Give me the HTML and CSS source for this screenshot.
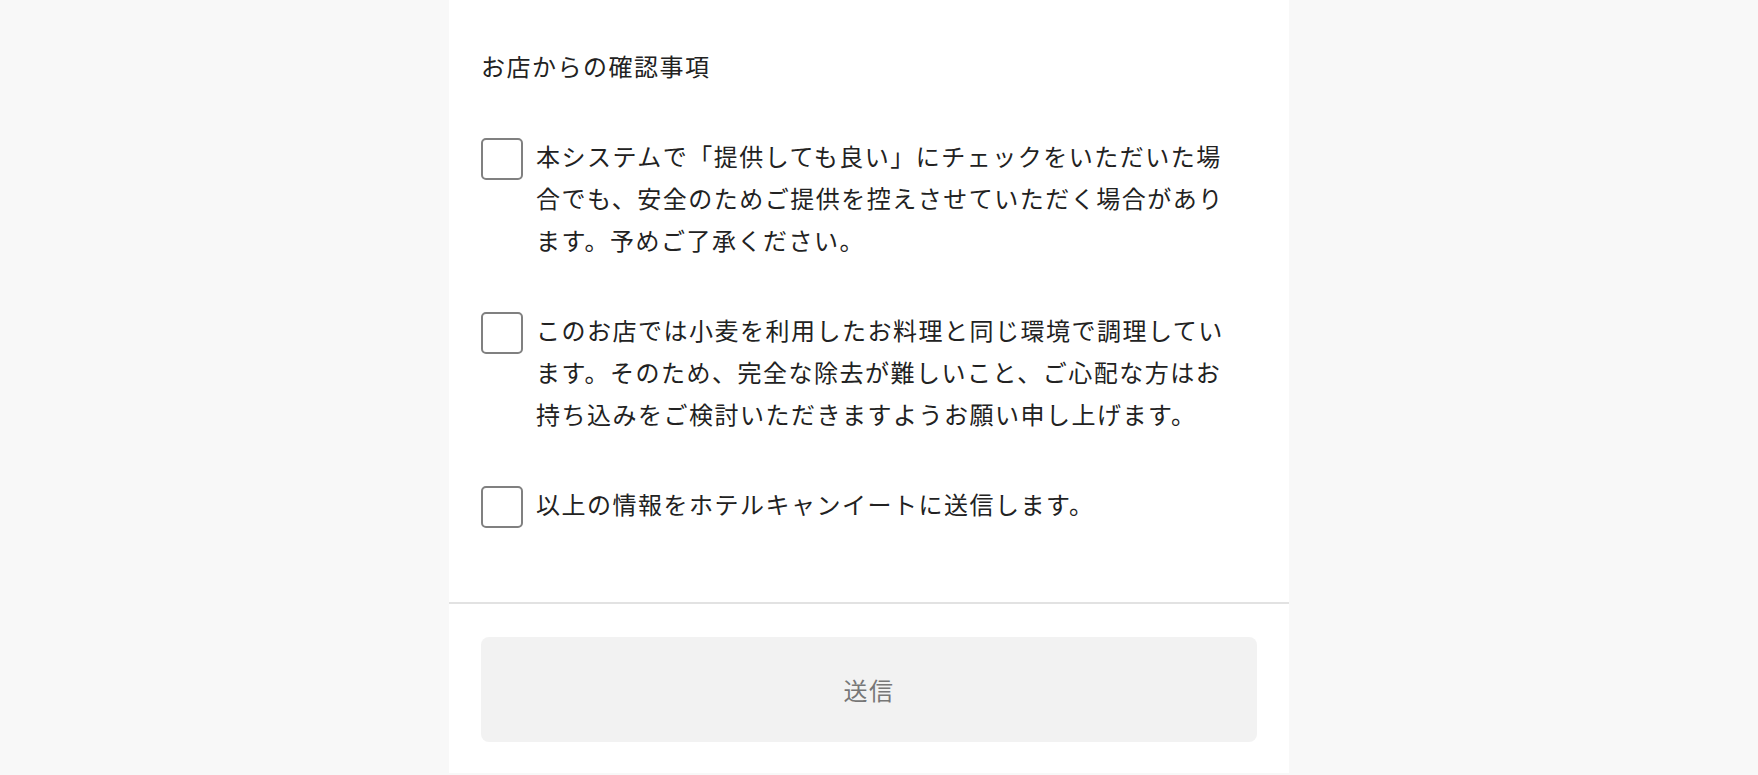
FILE: index.html
```html
<!DOCTYPE html>
<html lang="ja">
<head>
  <meta charset="UTF-8" />
  <meta name="viewport" content="width=device-width, initial-scale=1.0"/>
  <title>お店からの確認事項</title>
  <link rel="stylesheet" href="styles.css">
</head>
<body>

  <div class="page">
    <main class="panel">
      <section class="confirm">
        <h2 class="confirm-title">お店からの確認事項</h2>

        <label class="check-item">
          <input type="checkbox" class="check-box">
          <span class="check-text">本システムで「提供しても良い」にチェックをいただいた場合でも、安全のためご提供を控えさせていただく場合があります。予めご了承ください。</span>
        </label>

        <label class="check-item">
          <input type="checkbox" class="check-box">
          <span class="check-text">このお店では小麦を利用したお料理と同じ環境で調理しています。そのため、完全な除去が難しいこと、ご心配な方はお持ち込みをご検討いただきますようお願い申し上げます。</span>
        </label>

        <label class="check-item">
          <input type="checkbox" class="check-box">
          <span class="check-text">以上の情報をホテルキャンイートに送信します。</span>
        </label>
      </section>

      <div class="actions">
        <button class="submit-btn" disabled>送信</button>
      </div>
    </main>
  </div>

</body>
</html>
```

FILE: styles.css
```css
:root {
  --bg: #f8f8f8;
  --panel: #fff;
  --text: #222;
  --muted: #777;
  --line: #e2e2e2;
  --btn: #f2f2f2;
}

* {
  margin: 0;
  padding: 0;
  box-sizing: border-box;
}

html, body {
  font-family: "Noto Sans CJK JP", "Noto Sans", sans-serif;
  background: var(--bg);
  color: var(--text);
}

.page {
  display: flex;
  justify-content: center;
  padding-right: 20px;
}

.panel {
  width: 840px;
  background: var(--panel);
}

.confirm {
  display: flex;
  flex-direction: column;
  gap: 48px;
  padding: 45px 32px 74px;
  border-bottom: 2px solid var(--line);
}

.confirm-title {
  font-size: 24px;
  font-weight: 400;
  line-height: 42px;
  letter-spacing: 1.5px;
}

.check-item {
  display: flex;
  align-items: flex-start;
  gap: 13px;
  cursor: pointer;
}

.check-box {
  appearance: none;
  -webkit-appearance: none;
  flex: 0 0 42px;
  width: 42px;
  height: 42px;
  margin-top: 3px;
  border: 2px solid #808080;
  border-radius: 5px;
  background: #fff;
  cursor: pointer;
}

.check-box:checked {
  background: #333;
  border-color: #333;
}

.check-text {
  flex: 1;
  padding-right: 20px;
  font-size: 24px;
  line-height: 42px;
  letter-spacing: 1.5px;
}

.actions {
  padding: 33px 32px 31px;
}

.submit-btn {
  display: block;
  width: 100%;
  height: 105px;
  border: none;
  border-radius: 8px;
  background: var(--btn);
  color: var(--muted);
  font-family: inherit;
  font-size: 24px;
  letter-spacing: 1.5px;
}
```
